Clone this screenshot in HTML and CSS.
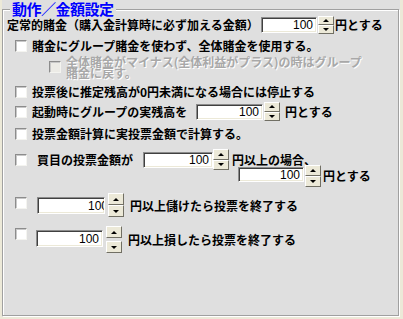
FILE: index.html
```html
<!DOCTYPE html>
<html lang="ja">
<head>
    <meta charset="UTF-8">
    <title>動作/金額設定</title>
    <link rel="stylesheet" href="styles.css">
</head>
<body>
    <div class="panel">
        <div class="group">
            <div class="caption">動作／金額設定</div>

            <!-- 定常的賭金 -->
            <div class="row row-base">
                <span class="label">定常的賭金（購入金計算時に必ず加える金額）</span>
                <span class="edit"><span class="val">100</span></span>
                <span class="updown"><span class="btn up"></span><span class="btn down"></span></span>
                <span class="unit">円とする</span>
            </div>

            <div class="row row-opt row-group">
                <span class="check"></span>
                <span class="label">賭金にグループ賭金を使わず、全体賭金を使用する。</span>
            </div>

            <div class="row row-revert">
                <span class="check disabled"></span>
                <span class="label">全体賭金がマイナス(全体利益がプラス)の時はグループ賭金に戻す。</span>
            </div>

            <div class="row row-opt row-zero">
                <span class="check"></span>
                <span class="label">投票後に推定残高が0円未満になる場合には停止する</span>
            </div>

            <div class="row row-opt row-start">
                <span class="check"></span>
                <span class="label">起動時にグループの実残高を</span>
                <span class="edit"><span class="val">100</span></span>
                <span class="updown"><span class="btn up"></span><span class="btn down"></span></span>
                <span class="unit">円とする</span>
            </div>

            <div class="row row-opt row-real">
                <span class="check"></span>
                <span class="label">投票金額計算に実投票金額で計算する。</span>
            </div>

            <!-- 買目ごとの上限 -->
            <div class="row row-opt row-buy">
                <span class="check"></span>
                <span class="label">買目の投票金額が</span>
                <span class="edit"><span class="val">100</span></span>
                <span class="updown"><span class="btn up"></span><span class="btn down"></span></span>
                <span class="unit">円以上の場合、</span>
            </div>
            <div class="row row-buy-2">
                <span class="edit"><span class="val">100</span></span>
                <span class="updown"><span class="btn up"></span><span class="btn down"></span></span>
                <span class="unit">円とする</span>
            </div>

            <!-- 終了条件 -->
            <div class="row row-opt row-stop row-win">
                <span class="check"></span>
                <span class="edit clip"><span class="val">100</span></span>
                <span class="updown"><span class="btn up"></span><span class="btn down"></span></span>
                <span class="unit">円以上儲けたら投票を終了する</span>
            </div>

            <div class="row row-opt row-stop row-loss">
                <span class="check"></span>
                <span class="edit"><span class="val">100</span></span>
                <span class="updown"><span class="btn up"></span><span class="btn down"></span></span>
                <span class="unit">円以上損したら投票を終了する</span>
            </div>
        </div>
    </div>
</body>
</html>
```

FILE: styles.css
```css
* {
    box-sizing: border-box;
}
body {
    margin: 0;
    width: 403px;
    height: 319px;
    overflow: hidden;
    background-color: #ece9d8;
    font-family: "Noto Sans CJK JP", sans-serif;
    font-size: 12px;
    font-weight: bold;
    line-height: 14px;
    color: #000;
}
.panel {
    margin-left: 2px;
    width: 398px;
    height: 317px;
    padding-top: 9px;
    background-color: #dfdfdf;
}
.group {
    width: 397px;
    height: 307px;
    padding-left: 4px;
    border: 1px solid #a0a0a0;
    box-shadow: inset 1px 1px 0 #fff, 1px 1px 0 #fff;
}
.caption {
    width: fit-content;
    margin: -9px 0 0 3px;
    padding: 0 2px;
    background-color: #dfdfdf;
    color: #0000ff;
    font-size: 15px;
    line-height: 16px;
    letter-spacing: -0.5px;
}

/* rows */
.row {
    display: flex;
    align-items: center;
    white-space: nowrap;
}
.row-opt {
    padding-left: 8px;
}
.row-base {
    margin-top: -1px;
    height: 18px;
}
.row-base .label {
    width: 254px;
}
.row-group {
    margin-top: 4px;
    height: 16px;
}
.row-revert {
    margin-top: 2px;
    height: 23px;
    padding-left: 42px;
    align-items: flex-start;
    color: #a8a8a8;
    text-shadow: 1px 1px 0 #fff;
}
.row-revert .check {
    margin-top: 5px;
}
.row-revert .label {
    width: 302px;
    white-space: normal;
    line-height: 11px;
}
.row-zero {
    margin-top: 5px;
    height: 16px;
}
.row-start {
    margin-top: 1px;
    height: 21px;
}
.row-start .label {
    width: 164px;
}
.row-real {
    margin-top: 4px;
    height: 16px;
}
.row-buy {
    margin-top: 7px;
    height: 21px;
}
.row-buy .check {
    margin-right: 10px;
}
.row-buy .label {
    width: 106px;
}
.row-buy-2 {
    margin-top: -5px;
    height: 22px;
    padding-left: 231px;
    align-items: flex-start;
}
.row-buy-2 .edit {
    margin-top: 2px;
}
.row-buy-2 .unit {
    align-self: center;
}
.row-stop {
    align-items: flex-start;
}
.row-stop .check {
    margin-right: 10px;
}
.row-win {
    margin-top: 6px;
    height: 24px;
}
.row-win .check,
.row-win .edit {
    margin-top: 4px;
}
.row-win .unit {
    margin-top: 5px;
}
.row-loss {
    margin-top: 9px;
    height: 27px;
}
.row-loss .check {
    margin-top: 2px;
}
.row-loss .edit {
    margin-top: 4px;
    margin-left: -1px;
}
.row-loss .unit {
    margin-top: 6px;
}
.row-stop .updown {
    margin-left: 3px;
    height: 100%;
}
.row-stop .unit {
    margin-left: 6px;
    line-height: 16px;
}

/* controls */
.check {
    flex: none;
    width: 12px;
    height: 12px;
    margin-right: 5px;
    background-color: #fff;
    border: 1px solid;
    border-color: #8c8c8c #f4f4f0 #f4f4f0 #8c8c8c;
    box-shadow: inset 1px 1px 0 #c8c8c8;
}
.check.disabled {
    background-color: #ecebe6;
}
.edit {
    flex: none;
    display: flex;
    align-items: center;
    justify-content: flex-end;
    height: 16px;
    padding-right: 3px;
    overflow: hidden;
    background-color: #fff;
    border: 1px solid;
    border-color: #8c8c8c #fff #fff #8c8c8c;
    box-shadow: inset 1px 1px 0 #404040, inset -1px -1px 0 #ece9d8;
    font-family: "Liberation Sans", Arial, sans-serif;
    font-weight: normal;
    font-size: 12px;
}
.edit.clip {
    padding-right: 0;
}
.edit.clip .val {
    margin-right: -4px;
}
.row-base .edit { width: 56px; }
.row-start .edit { width: 67px; }
.row-buy .edit { width: 70px; }
.row-buy-2 .edit { width: 66px; height: 15px; }
.row-win .edit { width: 68px; height: 17px; }
.row-loss .edit { width: 67px; height: 17px; }

.updown {
    flex: none;
    display: flex;
    flex-direction: column;
    justify-content: space-between;
    width: 16px;
    margin-left: 1px;
}
.btn {
    flex: 1;
    display: flex;
    align-items: center;
    justify-content: center;
    background-color: #ece9d8;
    border: 1px solid;
    border-color: #fff #716f64 #716f64 #fff;
}
.btn::after {
    content: "";
    border-left: 3px solid transparent;
    border-right: 3px solid transparent;
}
.up::after {
    border-bottom: 3px solid #000;
}
.down::after {
    border-top: 3px solid #000;
}
.row-base .updown { height: 18px; }
.row-start .updown { height: 19px; }
.row-buy .updown { height: 21px; margin-left: 0; }
.row-buy-2 .updown { height: 22px; }
.row-loss .updown { gap: 3px; }

.unit {
    margin-left: 1px;
}
.row-start .unit { margin-left: 5px; }
.row-buy .unit { margin-left: 3px; }
.row-buy-2 .unit { margin-left: 2px; }
```
